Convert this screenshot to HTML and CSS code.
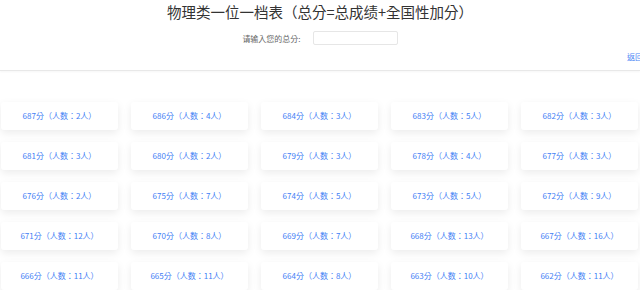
FILE: index.html
```html
<!DOCTYPE html>
<html lang="zh-TW">
  <head>
    <meta charset="UTF-8" />
    <meta name="viewport" content="width=device-width, initial-scale=1.0" />
    <title>物理类一位一档表</title>
    <link rel="stylesheet" href="styles.css">
  </head>
  <body>
    <div class="header">
      <h2 class="title">物理类一位一档表（总分=总成绩+全国性加分）</h2>
      <div class="search">
        <span class="label">请输入您的总分:</span>
        <input type="text" class="score-input" />
      </div>
      <div class="back"><a href="#" class="back-link">返回首页</a></div>
    </div>

    <div class="list js-list"></div>

    <script>
      const rows = [
        [687, 2], [686, 4], [684, 3], [683, 5], [682, 3],
        [681, 3], [680, 2], [679, 3], [678, 4], [677, 3],
        [676, 2], [675, 7], [674, 5], [673, 5], [672, 9],
        [671, 12], [670, 8], [669, 7], [668, 13], [667, 16],
        [666, 11], [665, 11], [664, 8], [663, 10], [662, 11]
      ];

      let html = '';
      rows.forEach(function (row) {
        html += `<div class="card">${row[0]}分（人数：${row[1]}人）</div>`;
      });
      document.querySelector('.js-list').innerHTML = html;
    </script>
  </body>
</html>
```

FILE: styles.css
```css
html {
  overflow: hidden;
}
body {
  margin: 0;
  background-color: white;
  font-family: "Noto Sans CJK TC", "Noto Sans CJK SC", sans-serif;
}
.header {
  padding-bottom: 8px;
  border-bottom: 1px solid #e8e8e8;
  box-shadow: 0 1px 2px rgba(0, 0, 0, 0.04);
}
.title {
  margin: 0;
  padding-top: 3px;
  font-size: 14.5px;
  line-height: 18px;
  font-weight: normal;
  color: #333;
  text-align: center;
}
.search {
  display: flex;
  justify-content: center;
  align-items: center;
  gap: 12px;
  margin-top: 10px;
}
.label {
  font-size: 8px;
  color: #666;
}
.score-input {
  box-sizing: border-box;
  width: 85px;
  height: 14px;
  padding: 0;
  border: 1px solid #e6e6e6;
  border-radius: 2px;
  outline: none;
}
.back {
  margin-top: 3px;
  margin-right: -19px;
  text-align: right;
  line-height: 10px;
}
.back-link {
  font-size: 8px;
  color: #4a86f5;
  text-decoration: none;
}
.list {
  display: grid;
  grid-template-columns: repeat(5, 117px);
  column-gap: 13px;
  row-gap: 12px;
  margin-top: 31px;
  padding-left: 1px;
}
.card {
  height: 28px;
  line-height: 28px;
  border-radius: 3px;
  background-color: white;
  box-shadow: 0 3px 8px rgba(0, 0, 0, 0.08);
  font-size: 8px;
  color: #3f7ef5;
  text-align: center;
}
```
